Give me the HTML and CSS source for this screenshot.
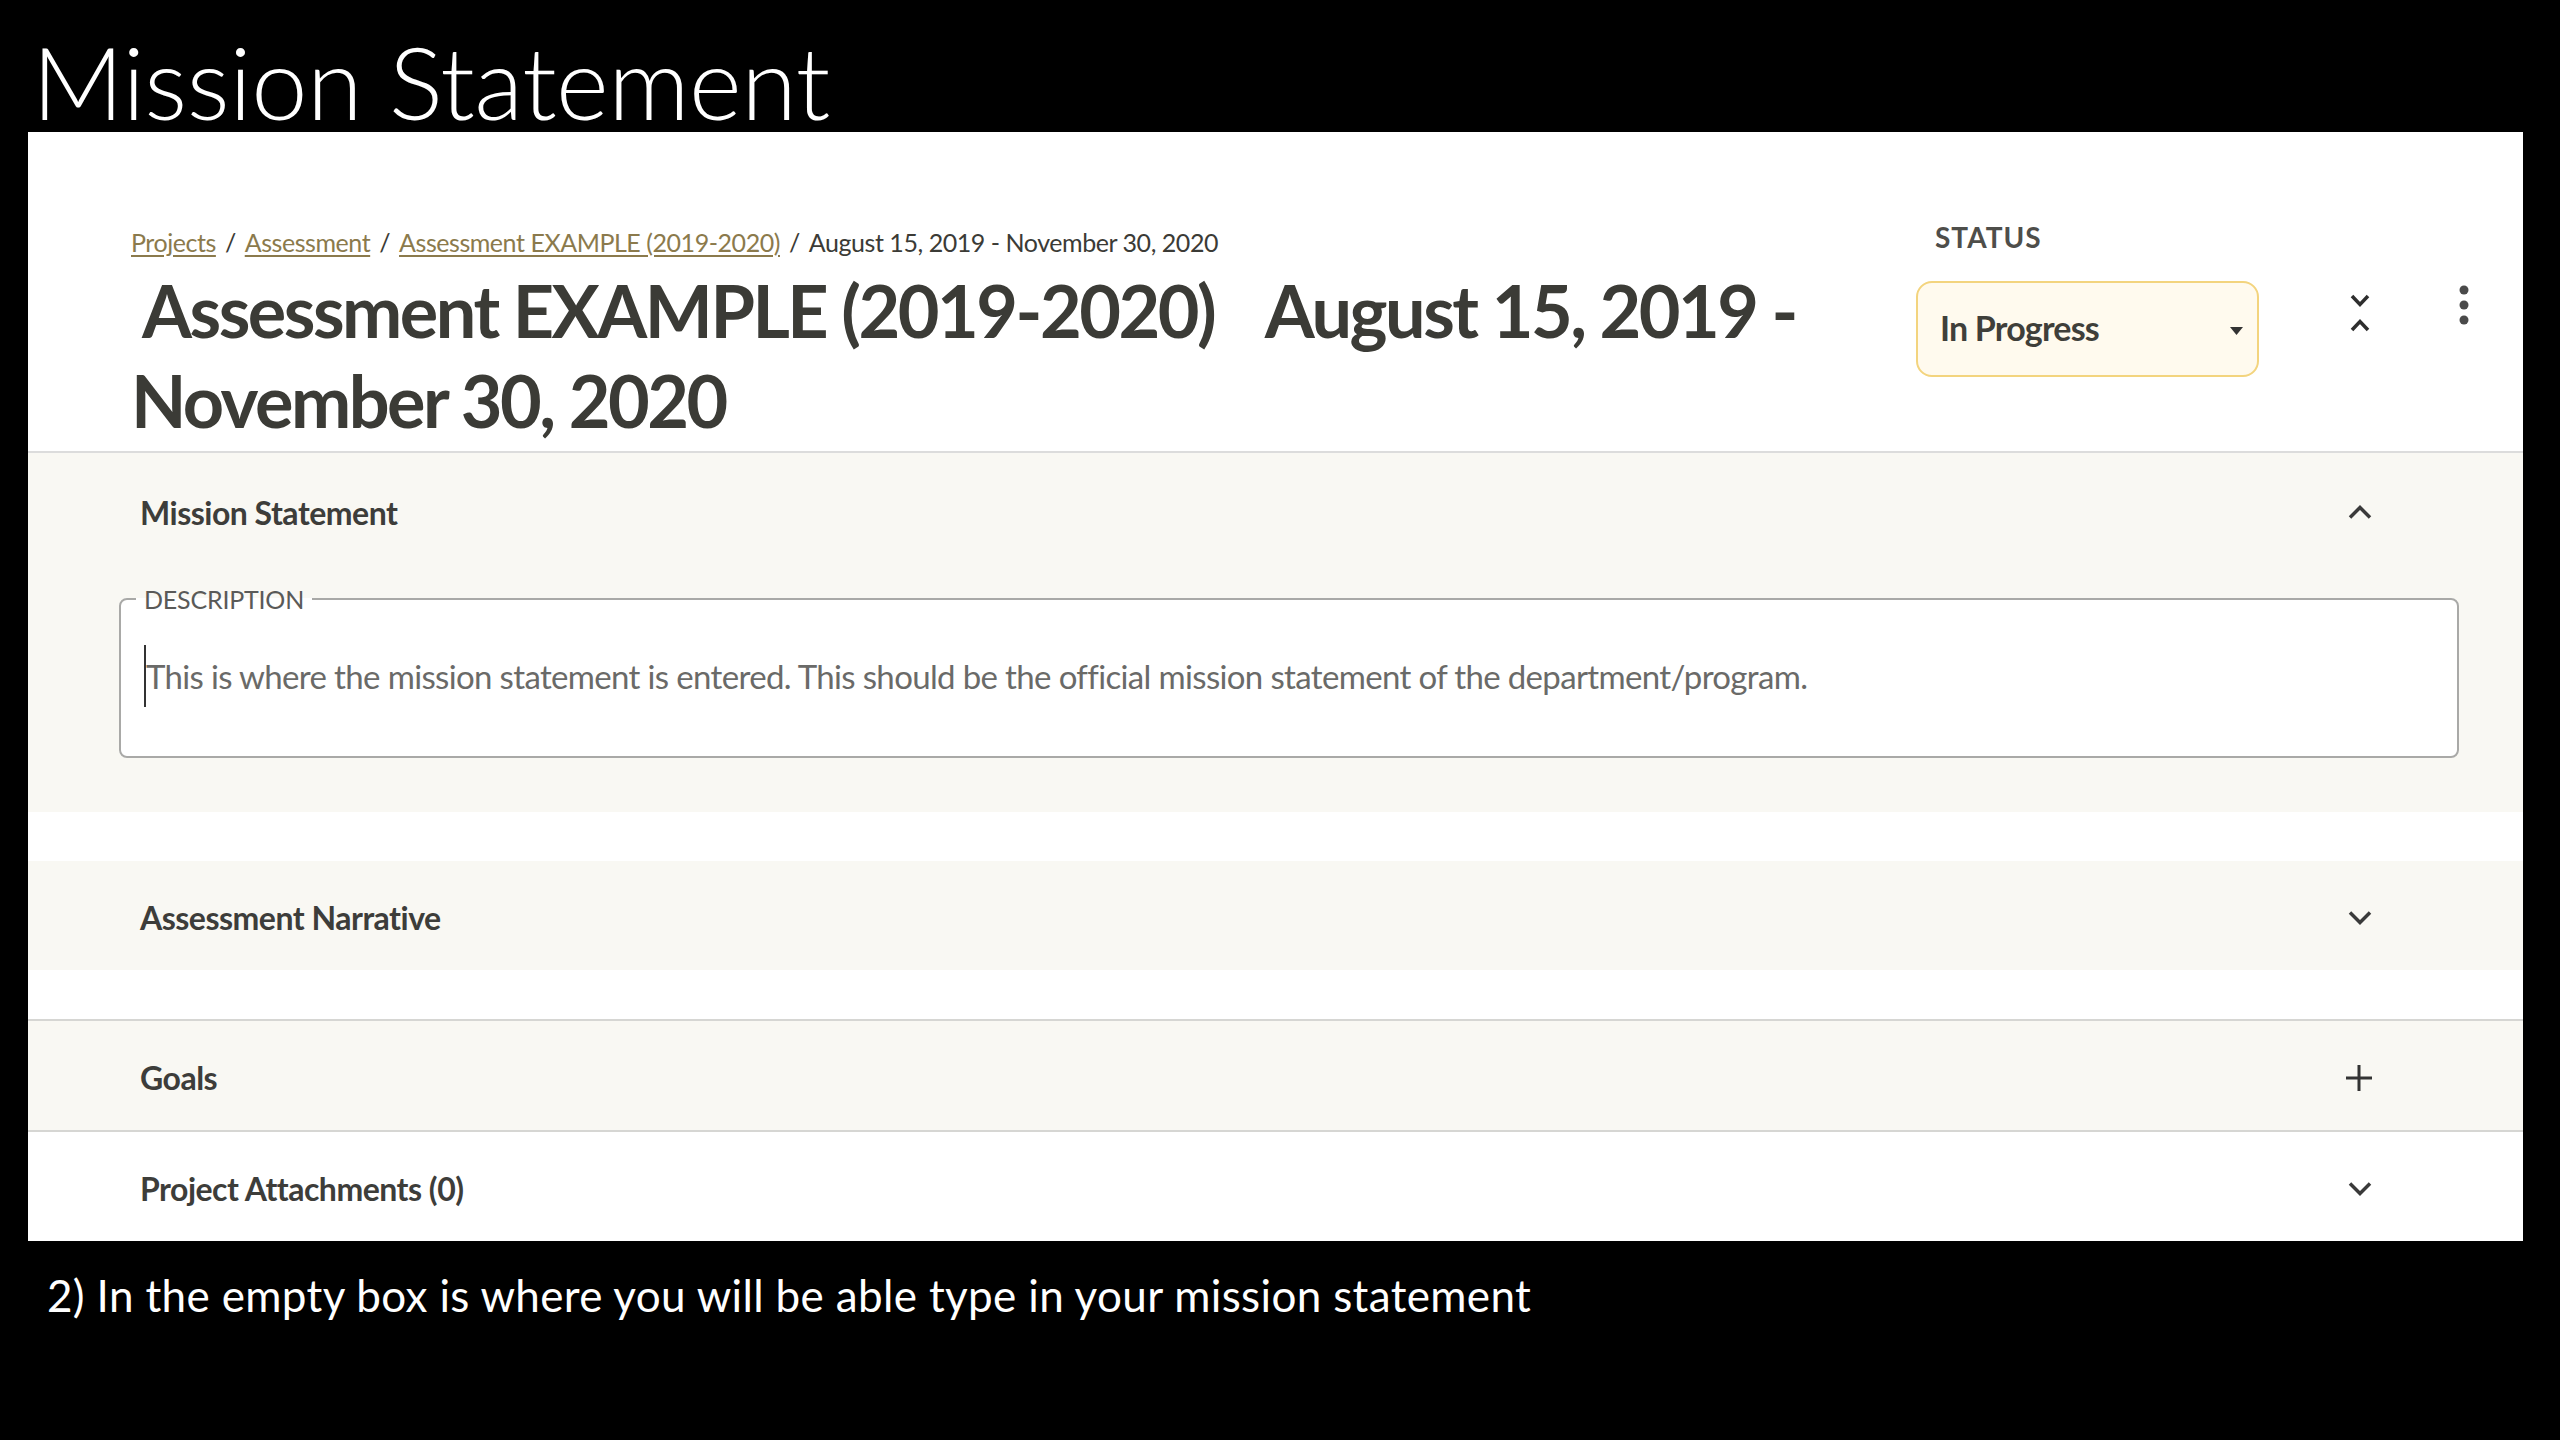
FILE: index.html
```html
<!DOCTYPE html>
<html>
<head>
    <meta charset="UTF-8">
    <title>Mission Statement</title>
    <link rel="stylesheet" href="styles.css">
</head>
<body>
    <div class="slide-title">Mission Statement</div>

    <div class="panel">
        <div class="project-header">
            <div class="project-info">
                <nav class="crumbs">
                    <a href="#">Projects</a><span class="sep">/</span><a href="#">Assessment</a><span class="sep">/</span><a href="#">Assessment EXAMPLE (2019-2020)</a><span class="sep">/</span><span>August 15, 2019 - November 30, 2020</span>
                </nav>
                <h1 class="project-title">
                    <span class="project-name">Assessment EXAMPLE (2019-2020)</span>
                    <span>August 15, 2019 -</span><br>
                    <span>November 30, 2020</span>
                </h1>
            </div>

            <div class="status-block">
                <div class="status-label">STATUS</div>
                <div class="status-select">
                    <span>In Progress</span>
                    <svg class="caret" width="13" height="8" viewBox="0 0 13 8"><path d="M0 0h13L6.5 8z" fill="#333"/></svg>
                </div>
            </div>

            <button class="icon-btn collapse-all" title="Collapse all">
                <svg width="24" height="40" viewBox="0 0 24 40" fill="none" stroke="#2e2e2e" stroke-width="3.5">
                    <path d="M4 3l8 8.5 8-8.5"/>
                    <path d="M4 37l8-8.5 8 8.5"/>
                </svg>
            </button>
            <button class="icon-btn more" title="More">
                <svg width="12" height="40" viewBox="0 0 12 40" fill="#4a4a4a">
                    <circle cx="6" cy="5" r="4.5"/>
                    <circle cx="6" cy="20" r="4.5"/>
                    <circle cx="6" cy="35" r="4.5"/>
                </svg>
            </button>
        </div>

        <section class="accordion open">
            <div class="accordion-head">
                <span class="accordion-title">Mission Statement</span>
                <svg class="chev" width="26" height="16" viewBox="0 0 26 16" fill="none" stroke="#3a3a3a" stroke-width="3.5"><path d="M3 13.5L13 3.5l10 10"/></svg>
            </div>
            <fieldset class="field">
                <legend>DESCRIPTION</legend>
                <div class="field-text"><span class="cursor"></span>This is where the mission statement is entered. This should be the official mission statement of the department/program.</div>
            </fieldset>
        </section>

        <section class="accordion gap-after">
            <div class="accordion-head">
                <span class="accordion-title">Assessment Narrative</span>
                <svg class="chev" width="26" height="16" viewBox="0 0 26 16" fill="none" stroke="#3a3a3a" stroke-width="3.5"><path d="M3 2.5l10 10 10-10"/></svg>
            </div>
        </section>

        <section class="accordion ruled">
            <div class="accordion-head">
                <span class="accordion-title">Goals</span>
                <svg class="chev" width="28" height="28" viewBox="0 0 28 28" fill="none" stroke="#333" stroke-width="3"><path d="M14 1v26M1 14h26"/></svg>
            </div>
        </section>

        <section class="accordion ruled plain">
            <div class="accordion-head">
                <span class="accordion-title">Project Attachments (0)</span>
                <svg class="chev" width="26" height="16" viewBox="0 0 26 16" fill="none" stroke="#3a3a3a" stroke-width="3.5"><path d="M3 2.5l10 10 10-10"/></svg>
            </div>
        </section>
    </div>

    <p class="caption">2) In the empty box is where you will be able type in your mission statement</p>
</body>
</html>
```

FILE: styles.css
```css
body {
    width: 2560px;
    height: 1440px;
    margin: 0;
    padding: 0;
    background: #000;
    font-family: 'Lato', 'Open Sans', sans-serif;
    overflow: hidden;
}

.slide-title {
    height: 132px;
    box-sizing: border-box;
    padding: 31px 0 0 32px;
    line-height: 101px;
    font-size: 101px;
    font-weight: 300;
    letter-spacing: -0.5px;
    color: #fff;
    white-space: nowrap;
}

.panel {
    width: 2495px;
    margin-left: 28px;
    background: #fff;
    color: #3b3b36;
}

/* header */

.project-header {
    display: flex;
    align-items: flex-start;
    border-bottom: 2px solid #dcdcdc;
}

.project-info {
    flex: 1;
    padding: 95px 0 6px 103px;
}

.crumbs {
    font-size: 25px;
    line-height: 30px;
    letter-spacing: -0.45px;
    color: #3b3b36;
    white-space: nowrap;
}

.crumbs a {
    color: #8b7a4c;
    text-decoration: underline;
    text-underline-offset: 3px;
}

.crumbs .sep {
    margin: 0 9px;
}

.project-title {
    margin: 8px 0 0 0;
    font-size: 72px;
    line-height: 90px;
    font-weight: 700;
    letter-spacing: -2.5px;
    color: #3b3b36;
    text-indent: 11px;
}

.project-name {
    margin-right: 38px;
}

.status-block {
    width: 343px;
    padding-top: 89px;
}

.status-label {
    font-size: 28px;
    line-height: 32px;
    font-weight: 700;
    letter-spacing: 1px;
    color: #4e4e4a;
    padding-left: 19px;
}

.status-select {
    margin-top: 28px;
    height: 96px;
    box-sizing: border-box;
    border: 2px solid #f3d47e;
    border-radius: 16px;
    background: #fffaee;
    display: flex;
    align-items: center;
    justify-content: space-between;
    padding: 0 14px 4px 22px;
    font-size: 34px;
    font-weight: 700;
    color: #3f3f3a;
    letter-spacing: -0.8px;
}

.status-select .caret {
    margin-top: 8px;
}

.icon-btn {
    border: none;
    background: none;
    padding: 0;
    display: flex;
    cursor: pointer;
}

.collapse-all {
    margin: 161px 0 0 89px;
}

.more {
    margin: 153px 53px 0 86px;
}

/* accordion sections */

.accordion {
    background: #f9f8f3;
}

.accordion-head {
    height: 109px;
    box-sizing: border-box;
    display: flex;
    align-items: center;
    justify-content: space-between;
    padding: 4px 150px 0 112px;
}

.accordion.open .accordion-head {
    height: 118px;
    padding-top: 0;
}

.accordion-title {
    font-size: 32px;
    font-weight: 700;
    letter-spacing: -0.5px;
    color: #3d3d3a;
}

.accordion.open {
    padding-bottom: 54px;
    margin-bottom: 49px;
}

.accordion.gap-after {
    margin-bottom: 49px;
}

.accordion.ruled {
    border-top: 2px solid #d6d6d3;
}

.accordion.plain {
    background: #fff;
}

.field {
    margin: 13px 64px 0 91px;
    padding: 31px 40px 49px 23px;
    border: 2px solid #a9a9a7;
    border-radius: 8px;
    background: #fff;
}

.field legend {
    margin-left: -8px;
    padding: 0 8px;
    font-size: 25px;
    line-height: 30px;
    letter-spacing: -0.2px;
    color: #5a5a58;
}

.field-text {
    font-size: 33px;
    line-height: 62px;
    letter-spacing: -0.65px;
    color: #6a6a68;
    white-space: nowrap;
}

.cursor {
    display: inline-block;
    width: 2px;
    height: 62px;
    background: #333;
    vertical-align: top;
}

.caption {
    margin: 24px 0 0 47px;
    font-size: 44px;
    line-height: 60px;
    letter-spacing: 0.35px;
    color: #fff;
}
```
